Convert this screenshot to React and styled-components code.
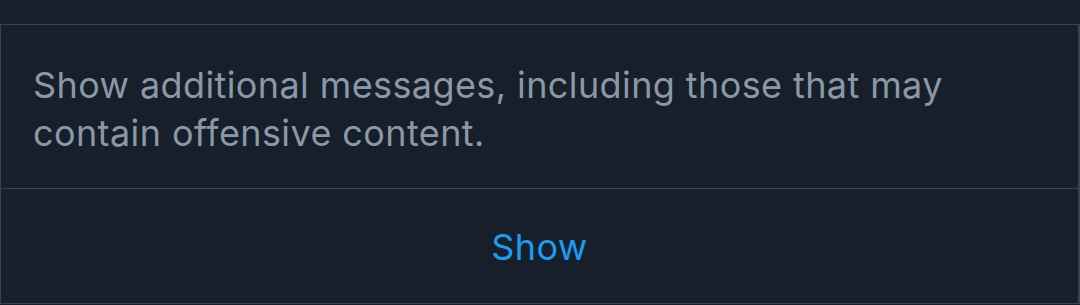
import React from 'react'
import styled, { createGlobalStyle } from 'styled-components'

const GlobalStyle = createGlobalStyle`
  html, body {
    margin: 0;
    padding: 0;
    background-color: #15202b;
  }
  body {
    font-family: Inter, Roboto, "Liberation Sans", sans-serif;
  }
`

const Page = styled.div`
  padding-top: 24px;
  width: 1080px;
  box-sizing: border-box;
`

const Card = styled.div`
  border: 1px solid #38444d;
  border-right-width: 2px;
  background-color: #161f2a;
  display: flex;
  flex-direction: column;
`

const Message = styled.p`
  margin: 0;
  padding: 36px 32px 31px 32px;
  color: #8b98a5;
  font-size: 36px;
  letter-spacing: 0.4px;
  line-height: 48px;
  border-bottom: 1px solid #38444d;
`

const ShowButton = styled.button`
  height: 114px;
  padding: 2px 0 0;
  border: none;
  background: transparent;
  color: #1d9bf0;
  font-family: inherit;
  font-size: 36px;
  letter-spacing: 0.4px;
  line-height: 48px;
  cursor: pointer;
  display: flex;
  align-items: center;
  justify-content: center;
`

export default function App() {
  return (
    <Page>
      <GlobalStyle />
      <Card>
        <Message>
          Show additional messages, including those that may contain offensive content.
        </Message>
        <ShowButton>Show</ShowButton>
      </Card>
    </Page>
  )
}
